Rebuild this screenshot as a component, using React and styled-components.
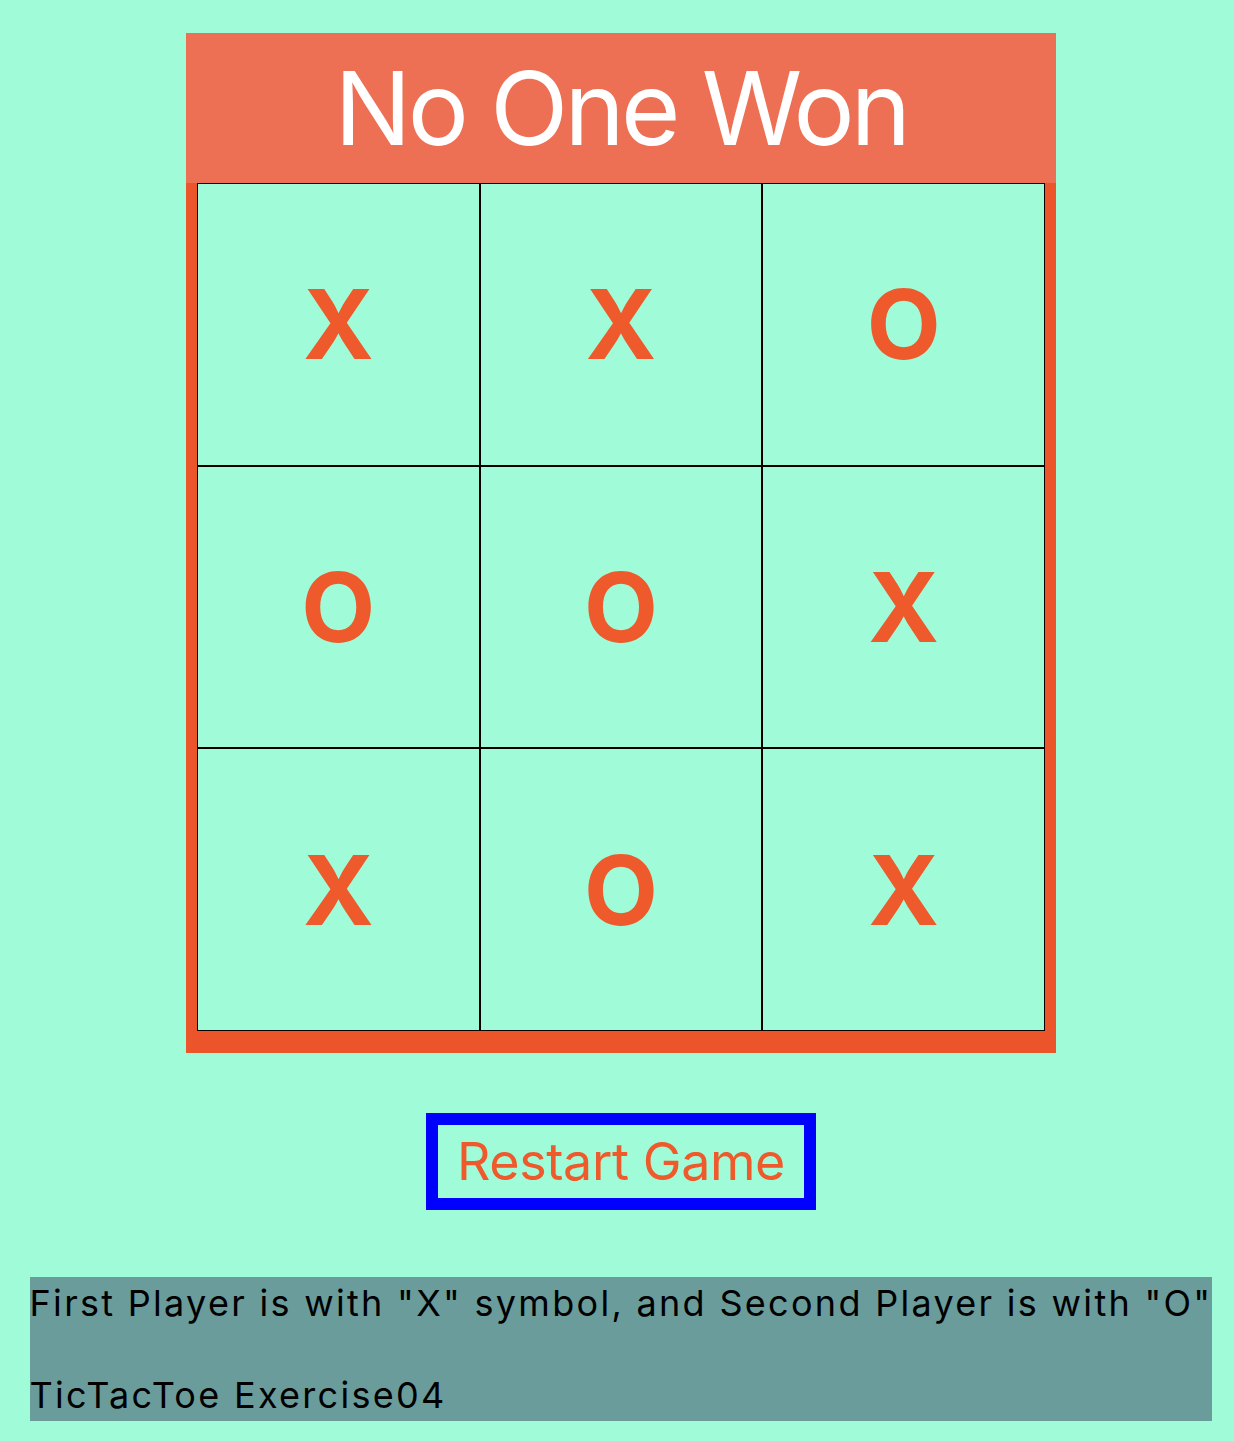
import React, { useState } from "react";
import styled, { createGlobalStyle } from "styled-components";

const GlobalStyle = createGlobalStyle`
  html, body {
    margin: 0;
    padding: 0;
    background-color: #a0fcd8;
    overflow: hidden;
  }
  body {
    font-family: Inter, "Liberation Sans", sans-serif;
  }
`;

const Page = styled.div`
  width: 1234px;
  min-height: 1441px;
  box-sizing: border-box;
  padding: 33px 0 20px 8px;
  display: flex;
  flex-direction: column;
  align-items: center;
`;

const Title = styled.div`
  width: 870px;
  height: 150px;
  background-color: #ed6f54;
  color: #ffffff;
  font-size: 102px;
  letter-spacing: -3.7px;
  display: flex;
  align-items: center;
  justify-content: center;
`;

const Board = styled.div`
  width: 870px;
  box-sizing: border-box;
  background-color: #ec5529;
  padding: 0 11px 22px 11px;
  display: flex;
  flex-direction: column;
`;

const Row = styled.div`
  display: flex;
`;

const Cell = styled.button`
  flex: 1;
  height: 282.67px;
  margin: 0;
  padding: 0;
  border: 1px solid #000000;
  background-color: #a0fcd8;
  color: #ee5a2c;
  font-family: Inter, "Liberation Sans", sans-serif;
  font-weight: 700;
  font-size: 96px;
  display: flex;
  align-items: center;
  justify-content: center;
  cursor: pointer;
`;

const RestartButton = styled.button`
  margin-top: 60px;
  height: 97px;
  width: 390px;
  box-sizing: border-box;
  border: 12px solid #0000ff;
  background: transparent;
  color: #ee5a2c;
  font-family: Inter, "Liberation Sans", sans-serif;
  font-size: 52px;
  letter-spacing: -0.4px;
  padding: 0;
  cursor: pointer;
`;

const Footer = styled.div`
  margin-top: 67px;
  width: fit-content;
  background-color: #6b9c9c;
  padding: 4px 0;
  display: flex;
  flex-direction: column;
  gap: 48px;
`;

const FooterLine = styled.p`
  margin: 0;
  font-size: 36px;
  line-height: 44px;
  letter-spacing: 2.3px;
  color: #000000;
  white-space: nowrap;
`;

const initialBoard = ["X", "X", "O", "O", "O", "X", "X", "O", "X"];

const App = () => {
  const [squares, setSquares] = useState(initialBoard);

  const rows = [0, 1, 2].map((r) => squares.slice(r * 3, r * 3 + 3));

  return (
    <>
      <GlobalStyle />
      <Page>
        <Title>No One Won</Title>
        <Board>
          {rows.map((row, r) => (
            <Row key={r}>
              {row.map((value, c) => (
                <Cell key={c}>{value}</Cell>
              ))}
            </Row>
          ))}
        </Board>
        <RestartButton onClick={() => setSquares(Array(9).fill(""))}>
          Restart Game
        </RestartButton>
        <Footer>
          <FooterLine>First Player is with "X" symbol, and Second Player is with "O"</FooterLine>
          <FooterLine>TicTacToe Exercise04</FooterLine>
        </Footer>
      </Page>
    </>
  );
};

export default App;
